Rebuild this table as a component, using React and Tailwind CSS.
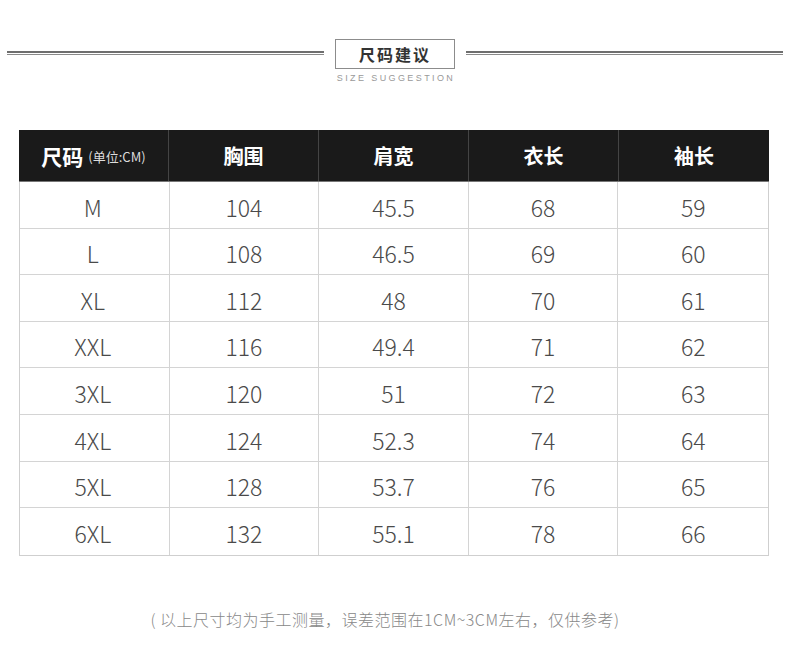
const rows = [
  ['M', '104', '45.5', '68', '59'],
  ['L', '108', '46.5', '69', '60'],
  ['XL', '112', '48', '70', '61'],
  ['XXL', '116', '49.4', '71', '62'],
  ['3XL', '120', '51', '72', '63'],
  ['4XL', '124', '52.3', '74', '64'],
  ['5XL', '128', '53.7', '76', '65'],
  ['6XL', '132', '55.1', '78', '66'],
];

const DoubleLine = () => (
  <div className="flex-1 flex flex-col gap-[1px]">
    <div className="h-[2px] bg-[#6e6e6e]" />
    <div className="h-[1px] bg-[#8a8a8a]" />
  </div>
);

export default function App() {
  return (
    <div
      className="w-[790px] h-[669px] bg-white overflow-hidden"
      style={{ fontFamily: '"Noto Sans CJK SC", "Noto Sans", sans-serif' }}
    >
      {/* 标题 */}
      <div className="flex items-start pt-[39px] px-[7px]">
        <div className="flex-1 pt-[12px]">
          <DoubleLine />
        </div>
        <div className="w-[120px] mx-[11px] flex flex-col items-center">
          <div className="w-full h-[30px] border border-[#8c8c8c] flex items-center justify-center text-[16px] font-bold text-[#333] tracking-[2px]">
            尺码建议
          </div>
          <div
            className="mt-[3px] text-[9px] text-[#999] tracking-[2.4px] leading-[12px] whitespace-nowrap pl-[2px]"
            style={{ fontFamily: '"Liberation Sans", Arial, sans-serif' }}
          >
            SIZE SUGGESTION
          </div>
        </div>
        <div className="flex-1 pt-[12px]">
          <DoubleLine />
        </div>
      </div>

      {/* 表格 */}
      <div className="mt-[46px] mx-[19px] w-[750px]">
        <div className="grid grid-cols-5 h-[52px] bg-[#1a1a1a] text-white font-bold text-[20px] border-b border-[#777]">
          <div className="flex items-center justify-center border-r border-[#444] pt-[2px]">
            <span className="text-[21px]">尺码</span>
            <span className="ml-[5px] text-[13px] font-normal text-[#ddd]">(单位:CM)</span>
          </div>
          <div className="flex items-center justify-center border-r border-[#444]">胸围</div>
          <div className="flex items-center justify-center border-r border-[#444]">肩宽</div>
          <div className="flex items-center justify-center border-r border-[#444]">衣长</div>
          <div className="flex items-center justify-center">袖长</div>
        </div>
        <div className="border-x border-b border-[#cfcfcf]">
          {rows.map((r, i) => (
            <div
              key={i}
              className={`grid grid-cols-5 h-[46.6px] text-[23px] font-light text-[#4a4a4a] ${i < rows.length - 1 ? 'border-b border-[#d4d4d4]' : ''}`}
            >
              {r.map((c, j) => (
                <div
                  key={j}
                  className={`flex items-center justify-center pt-[4px] ${j === 0 ? 'pr-[3px]' : ''} ${j < 4 ? 'border-r border-[#d4d4d4]' : ''}`}
                >
                  {c}
                </div>
              ))}
            </div>
          ))}
        </div>
      </div>

      <div className="mt-[51px] pr-[20px] text-center text-[16px] text-[#888] font-light tracking-[0.5px]">
        ( 以上尺寸均为手工测量，误差范围在1CM~3CM左右，仅供参考)
      </div>
    </div>
  );
}
